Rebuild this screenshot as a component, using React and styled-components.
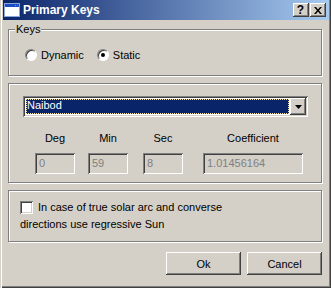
import React from 'react';
import styled, { createGlobalStyle } from 'styled-components';

const face = '#d4d0c8';

const GlobalStyle = createGlobalStyle`
  html, body {
    margin: 0;
    padding: 0;
    background: ${face};
  }
  body {
    font-family: "Liberation Sans", Arial, sans-serif;
    font-size: 11px;
    color: #000;
  }
`;

// bordes clasicos
const raised = `
  box-shadow: inset -1px -1px #404040, inset 1px 1px #fff, inset -2px -2px #808080;
`;
const sunken = `
  box-shadow: inset 1px 1px #808080, inset -1px -1px #fff, inset 2px 2px #404040, inset -2px -2px ${face};
`;

const Window = styled.div`
  width: 331px;
  height: 288px;
  box-sizing: border-box;
  background: ${face};
  padding: 0 2px 3px 3px;
  display: flex;
  flex-direction: column;
  box-shadow: inset 1px 0 ${face}, inset 2px 0 #fff, inset -1px -1px #404040, inset -2px -2px #808080;
`;

const TitleBar = styled.div`
  height: 20px;
  flex: none;
  display: flex;
  align-items: center;
  padding: 0 3px 0 1px;
  background: linear-gradient(to right, #0a246a, #a6caf0);
`;

const Title = styled.span`
  margin-left: 3px;
  color: #fff;
  font-weight: bold;
  font-size: 12px;
`;

const CaptionButtons = styled.div`
  margin-left: auto;
  display: flex;
  gap: 1px;
`;

const CaptionButton = styled.div`
  width: 16px;
  height: 14px;
  background: ${face};
  ${raised}
  display: flex;
  align-items: center;
  justify-content: center;
  font-weight: bold;
  font-size: 12px;
  line-height: 14px;
  padding-right: 1px;
  box-sizing: border-box;
`;

const Content = styled.div`
  display: flex;
  flex-direction: column;
  padding: 9px 7px 0 5px;
`;

const GroupBox = styled.div`
  position: relative;
  box-sizing: border-box;
  height: ${(p) => p.$h}px;
  margin-top: ${(p) => p.$mt || 0}px;
  border: 1px solid #808080;
  box-shadow: inset 1px 1px #fff, 1px 1px #fff;
`;

const Legend = styled.span`
  position: absolute;
  top: -7px;
  left: 6px;
  padding: 0 1px;
  background: ${face};
  line-height: 13px;
`;

const RadioRow = styled.div`
  display: flex;
  align-items: center;
  padding: 19px 0 0 16px;
`;

const RadioLabel = styled.label`
  display: flex;
  align-items: center;
  gap: 4px;
  margin-right: 13px;
`;

const Radio = styled.span`
  position: relative;
  width: 12px;
  height: 12px;
  box-sizing: border-box;
  border-radius: 50%;
  background: #fff;
  border: 1px solid;
  border-color: #808080 #fff #fff #808080;
  box-shadow: inset 1px 1px #404040;

  &::after {
    content: '';
    display: ${(p) => (p.$checked ? 'block' : 'none')};
    position: absolute;
    left: 3px;
    top: 3px;
    width: 4px;
    height: 4px;
    border-radius: 50%;
    background: #000;
  }
`;

const Combo = styled.div`
  display: flex;
  width: 285px;
  height: 21px;
  box-sizing: border-box;
  padding: 2px;
  margin: 12px 0 0 14px;
  background: #fff;
  ${sunken}
`;

const ComboField = styled.div`
  flex: 1;
  margin: 1px;
  padding-left: 1px;
  background: #0a246a;
  color: #fff;
  line-height: 13px;
  outline: 1px dotted #f4e8b0;
  outline-offset: -1px;
`;

const DropButton = styled.div`
  width: 16px;
  height: 17px;
  background: ${face};
  ${raised}
  display: flex;
  align-items: center;
  justify-content: center;
`;

const FieldsRow = styled.div`
  display: flex;
  padding: 15px 0 0 26px;
`;

const Field = styled.div`
  display: flex;
  flex-direction: column;
  align-items: center;
  width: ${(p) => p.$w}px;
  margin-left: ${(p) => p.$ml || 0}px;
`;

const FieldLabel = styled.span`
  line-height: 13px;
  white-space: nowrap;
`;

const TextBox = styled.div`
  margin-top: 8px;
  width: 100%;
  height: 21px;
  box-sizing: border-box;
  padding: 3px 4px 0;
  color: #808080;
  line-height: 14px;
  background: ${face};
  ${sunken}
`;

const CheckText = styled.div`
  width: 230px;
  padding: 8px 0 0 11px;
  line-height: 17px;
`;

const CheckBox = styled.span`
  display: inline-block;
  width: 13px;
  height: 13px;
  box-sizing: border-box;
  margin-right: 5px;
  vertical-align: -3px;
  background: #fff;
  ${sunken}
`;

const Buttons = styled.div`
  display: flex;
  justify-content: flex-end;
  gap: 6px;
  margin-top: 10px;
`;

const Button = styled.div`
  width: 75px;
  height: 23px;
  box-sizing: border-box;
  background: ${face};
  ${raised}
  display: flex;
  align-items: center;
  justify-content: center;
`;

const WindowIcon = () => (
  <svg width="16" height="14" viewBox="0 0 16 14">
    <rect x="0.5" y="0.5" width="15" height="13" fill="#fff" stroke="#8ca6d8" />
    <rect x="1" y="1" width="14" height="3" fill="#1c4bc8" />
    <rect x="11" y="2" width="1" height="1" fill="#f08040" />
    <rect x="13" y="2" width="1" height="1" fill="#e04020" />
  </svg>
);

const App = () => {
  return (
    <Window>
      <GlobalStyle />
      <TitleBar>
        <WindowIcon />
        <Title>Primary Keys</Title>
        <CaptionButtons>
          <CaptionButton>?</CaptionButton>
          <CaptionButton>
            <svg width="8" height="7" viewBox="0 0 8 7">
              <path d="M0 0h2l2 2.5L6 0h2L5 3.5 8 7H6L4 4.5 2 7H0l3-3.5z" fill="#000" />
            </svg>
          </CaptionButton>
        </CaptionButtons>
      </TitleBar>

      <Content>
        <GroupBox $h={47}>
          <Legend>Keys</Legend>
          <RadioRow>
            <RadioLabel>
              <Radio />
              Dynamic
            </RadioLabel>
            <RadioLabel>
              <Radio $checked />
              Static
            </RadioLabel>
          </RadioRow>
        </GroupBox>

        <GroupBox $h={100} $mt={7}>
          <Combo>
            <ComboField>Naibod</ComboField>
            <DropButton>
              <svg width="7" height="4" viewBox="0 0 7 4">
                <path d="M0 0h7L3.5 4z" fill="#000" />
              </svg>
            </DropButton>
          </Combo>
          <FieldsRow>
            <Field $w={40}>
              <FieldLabel>Deg</FieldLabel>
              <TextBox>0</TextBox>
            </Field>
            <Field $w={40} $ml={13}>
              <FieldLabel>Min</FieldLabel>
              <TextBox>59</TextBox>
            </Field>
            <Field $w={40} $ml={15}>
              <FieldLabel>Sec</FieldLabel>
              <TextBox>8</TextBox>
            </Field>
            <Field $w={100} $ml={20}>
              <FieldLabel>Coefficient</FieldLabel>
              <TextBox>1.01456164</TextBox>
            </Field>
          </FieldsRow>
        </GroupBox>

        <GroupBox $h={52} $mt={7}>
          <CheckText>
            <CheckBox />
            In case of true solar arc and converse directions use regressive Sun
          </CheckText>
        </GroupBox>

        <Buttons>
          <Button>Ok</Button>
          <Button>Cancel</Button>
        </Buttons>
      </Content>
    </Window>
  );
};

export default App;
